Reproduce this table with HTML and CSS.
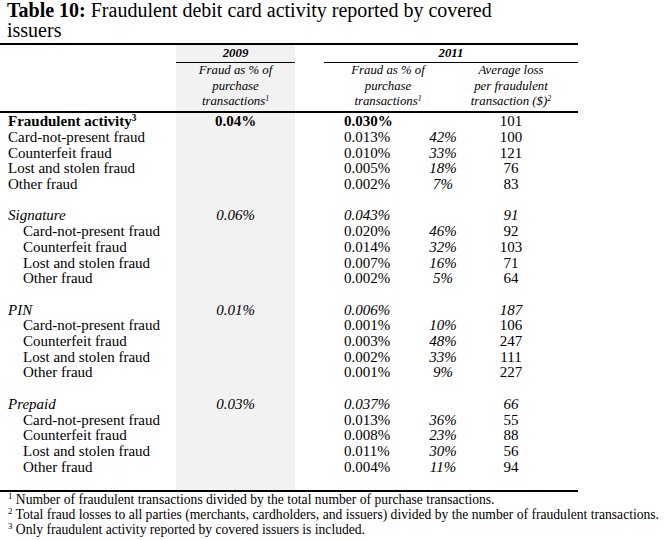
FILE: index.html
```html
<!DOCTYPE html>
<html>
<head>
<meta charset="utf-8">
<link rel="stylesheet" href="styles.css">
</head>
<body>
<div class="page">
  <h1 class="title"><b>Table 10:</b> Fraudulent debit card activity reported by covered<br>issuers</h1>
  <table class="data">
    <colgroup>
      <col class="c-label"><col class="c-2009"><col class="c-gap"><col class="c-val"><col class="c-pct"><col class="c-avg">
    </colgroup>
    <thead>
      <tr class="h-year">
        <th></th>
        <th class="shade year year-2009">2009</th>
        <th></th>
        <th class="year year-2011" colspan="3">2011</th>
      </tr>
      <tr class="h-desc">
        <th></th>
        <th class="shade desc">Fraud as % of<br>purchase<br>transactions<sup>1</sup></th>
        <th></th>
        <th class="desc desc-fraud" colspan="2">Fraud as % of<br>purchase<br>transactions<sup>1</sup></th>
        <th class="desc desc-avg">Average loss<br>per fraudulent<br>transaction ($)<sup>2</sup></th>
      </tr>
    </thead>
    <tbody>
      <tr class="bold">
        <td class="label">Fraudulent activity<sup>3</sup></td>
        <td class="shade v09">0.04%</td><td></td>
        <td class="v11">0.030%</td><td class="pct"></td><td class="avg norm">101</td>
      </tr>
      <tr><td class="label">Card-not-present fraud</td><td class="shade"></td><td></td><td class="v11">0.013%</td><td class="pct">42%</td><td class="avg">100</td></tr>
      <tr><td class="label">Counterfeit fraud</td><td class="shade"></td><td></td><td class="v11">0.010%</td><td class="pct">33%</td><td class="avg">121</td></tr>
      <tr><td class="label">Lost and stolen fraud</td><td class="shade"></td><td></td><td class="v11">0.005%</td><td class="pct">18%</td><td class="avg">76</td></tr>
      <tr><td class="label">Other fraud</td><td class="shade"></td><td></td><td class="v11">0.002%</td><td class="pct">7%</td><td class="avg">83</td></tr>
      <tr class="blank"><td></td><td class="shade"></td><td></td><td></td><td></td><td></td></tr>

      <tr class="ital"><td class="label">Signature</td><td class="shade v09">0.06%</td><td></td><td class="v11">0.043%</td><td class="pct"></td><td class="avg">91</td></tr>
      <tr><td class="label sub">Card-not-present fraud</td><td class="shade"></td><td></td><td class="v11">0.020%</td><td class="pct">46%</td><td class="avg">92</td></tr>
      <tr><td class="label sub">Counterfeit fraud</td><td class="shade"></td><td></td><td class="v11">0.014%</td><td class="pct">32%</td><td class="avg">103</td></tr>
      <tr><td class="label sub">Lost and stolen fraud</td><td class="shade"></td><td></td><td class="v11">0.007%</td><td class="pct">16%</td><td class="avg">71</td></tr>
      <tr><td class="label sub">Other fraud</td><td class="shade"></td><td></td><td class="v11">0.002%</td><td class="pct">5%</td><td class="avg">64</td></tr>
      <tr class="blank"><td></td><td class="shade"></td><td></td><td></td><td></td><td></td></tr>

      <tr class="ital"><td class="label">PIN</td><td class="shade v09">0.01%</td><td></td><td class="v11">0.006%</td><td class="pct"></td><td class="avg">187</td></tr>
      <tr><td class="label sub">Card-not-present fraud</td><td class="shade"></td><td></td><td class="v11">0.001%</td><td class="pct">10%</td><td class="avg">106</td></tr>
      <tr><td class="label sub">Counterfeit fraud</td><td class="shade"></td><td></td><td class="v11">0.003%</td><td class="pct">48%</td><td class="avg">247</td></tr>
      <tr><td class="label sub">Lost and stolen fraud</td><td class="shade"></td><td></td><td class="v11">0.002%</td><td class="pct">33%</td><td class="avg">111</td></tr>
      <tr><td class="label sub">Other fraud</td><td class="shade"></td><td></td><td class="v11">0.001%</td><td class="pct">9%</td><td class="avg">227</td></tr>
      <tr class="blank"><td></td><td class="shade"></td><td></td><td></td><td></td><td></td></tr>

      <tr class="ital"><td class="label">Prepaid</td><td class="shade v09">0.03%</td><td></td><td class="v11">0.037%</td><td class="pct"></td><td class="avg">66</td></tr>
      <tr><td class="label sub">Card-not-present fraud</td><td class="shade"></td><td></td><td class="v11">0.013%</td><td class="pct">36%</td><td class="avg">55</td></tr>
      <tr><td class="label sub">Counterfeit fraud</td><td class="shade"></td><td></td><td class="v11">0.008%</td><td class="pct">23%</td><td class="avg">88</td></tr>
      <tr><td class="label sub">Lost and stolen fraud</td><td class="shade"></td><td></td><td class="v11">0.011%</td><td class="pct">30%</td><td class="avg">56</td></tr>
      <tr><td class="label sub">Other fraud</td><td class="shade"></td><td></td><td class="v11">0.004%</td><td class="pct">11%</td><td class="avg">94</td></tr>
      <tr class="tail"><td></td><td class="shade"></td><td></td><td></td><td></td><td></td></tr>
    </tbody>
  </table>
  <div class="notes">
    <p><sup>1</sup> Number of fraudulent transactions divided by the total number of purchase transactions.</p>
    <p><sup>2</sup> Total fraud losses to all parties (merchants, cardholders, and issuers) divided by the number of fraudulent transactions.</p>
    <p><sup>3</sup> Only fraudulent activity reported by covered issuers is included.</p>
  </div>
</div>
</body>
</html>
```

FILE: styles.css
```css
html, body {
  margin: 0;
  padding: 0;
  background: #ffffff;
}
body {
  font-family: "Liberation Serif", "Times New Roman", serif;
  color: #000;
}
.page {
  width: 664px;
}
.title {
  margin: 0 0 3px 0;
  padding-left: 7px;
  font-size: 20px;
  line-height: 20px;
  font-weight: normal;
}
.title b {
  font-weight: bold;
}
.data {
  width: 578px;
  table-layout: fixed;
  border-collapse: collapse;
  border-top: 2px solid #000;
  border-bottom: 2px solid #000;
}
.c-label { width: 176px; }
.c-2009 { width: 119px; }
.c-gap { width: 29px; }
.c-val { width: 88px; }
.c-pct { width: 56px; }
.c-avg { width: 110px; }

.data th, .data td {
  padding: 0;
  vertical-align: top;
}
.shade {
  background: #f2f2f2;
}
.data thead th {
  font-size: 12.8px;
  line-height: 15.3px;
  font-style: italic;
  text-align: center;
}
.h-year th {
  padding-top: 1px;
  padding-bottom: 1px;
}
.year {
  font-weight: bold;
  border-bottom: 1px solid #000;
}
.h-desc th {
  font-weight: normal;
  padding-top: 0;
  padding-bottom: 2px;
  border-bottom: 2px solid #000;
}
.desc-fraud {
  padding-right: 16px !important;
}
.desc-avg {
  padding-right: 24px !important;
}
sup {
  font-size: 0.62em;
  line-height: 0;
  vertical-align: 0.55em;
}
.data tbody td {
  font-size: 15px;
  line-height: 15.7px;
  height: 15.7px;
  white-space: nowrap;
}
.data tbody tr:first-child td {
  padding-top: 1px;
}
.label {
  padding-left: 8px !important;
}
.label.sub {
  padding-left: 23px !important;
}
.v09 {
  text-align: center;
}
.v11 {
  padding-left: 20px !important;
}
.pct {
  text-align: center;
  font-style: italic;
  padding-left: 6px !important;
}
.avg {
  text-align: center;
  padding-right: 24px !important;
}
.bold td {
  font-weight: bold;
}
.bold td.norm {
  font-weight: normal;
}
.ital td {
  font-style: italic;
}
.data tbody tr.tail td {
  height: 15px;
}
.notes {
  font-size: 13.6px;
  line-height: 15px;
  white-space: nowrap;
}
.notes p {
  margin: 0;
  padding-left: 8px;
}
.notes sup {
  font-size: 0.65em;
}
```
